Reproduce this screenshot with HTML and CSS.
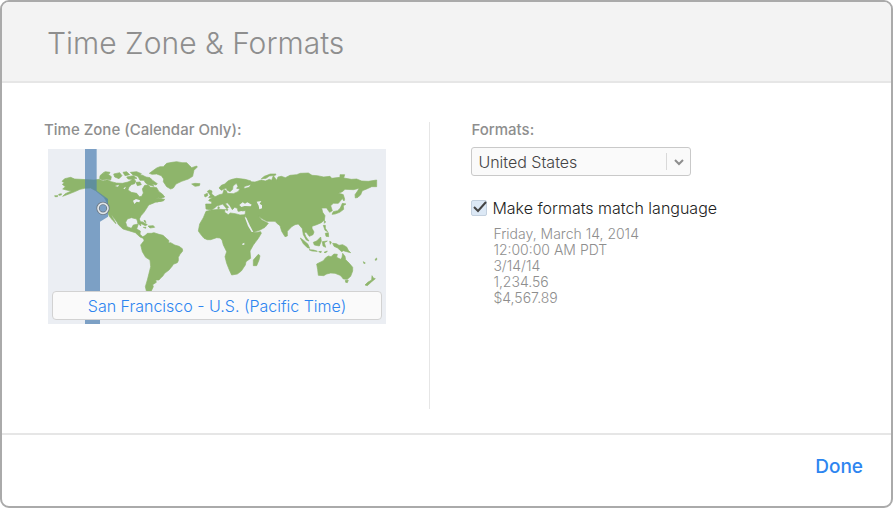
FILE: index.html
```
<!DOCTYPE html>
<html lang="en">
<head>
  <meta charset="UTF-8" />
  <meta name="viewport" content="width=device-width, initial-scale=1.0" />
  <title>Time Zone &amp; Formats</title>
  <link rel="stylesheet" href="styles.css">
</head>
<body>
  <form class="dialog">
    <header>
      <h1>Time Zone &amp; Formats</h1>
    </header>

    <main class="content">
      <section class="timezone">
        <h2>Time Zone (Calendar Only):</h2>
        <div class="map">
          <svg viewBox="0 0 1014 525" role="img" aria-label="World map">
            <g class="land">
              <!-- North America -->
              <path d="M43 106L49 101L42 97L50 89L68 85L80 90L98 91L138 93L153 91L165 96L178 92L190 98L205 102L223 103L240 99L252 93L263 96L260 104L250 107L243 115L240 123L250 130L266 133L274 143L281 142L286 132L283 120L290 109L300 108L308 115L318 115L326 116L333 128L343 135L350 144L340 148L330 146L322 152L336 153L340 157L326 158L312 164L302 168L296 178L288 190L279 200L274 210L279 222L278 231L270 222L266 210L250 206L238 210L233 220L237 233L250 238L256 228L271 225L266 240L277 246L276 256L284 263L298 258L290 270L276 264L262 251L245 246L225 240L212 228L206 218L194 202L190 198L201 218L204 224L194 214L184 202L180 193L177 178L177 160L168 145L153 133L143 125L128 117L110 118L96 121L83 127L60 136L44 142L52 134L70 126L55 123L44 120L52 113Z" />
              <path d="M156 80L164 73L181 76L190 83L188 93L177 90L164 93L155 89ZM166 71L172 68L186 70L184 74L172 75ZM197 75L215 71L222 80L213 89L200 84ZM225 70L236 68L245 77L231 80ZM236 84L256 80L267 88L250 91L240 90ZM247 70L266 68L280 74L274 83L255 78ZM270 82L282 78L294 84L306 86L315 95L328 104L324 108L312 105L318 112L300 107L292 101L288 94L276 94ZM264 100L276 99L280 107L268 110ZM320 152L330 147L342 150L350 151L346 156L334 157L326 160ZM253 87L262 94L251 96ZM20 140L30 140L28 143L21 143ZM32 136L40 134L40 138L33 139Z" />
              <path d="M268 222L282 218L298 227L292 230L280 224ZM300 231L316 230L320 235L306 237ZM286 235L294 235L293 238ZM288 214L292 215L294 221L289 218Z" />
              <!-- Greenland, Iceland -->
              <path d="M304 73L326 57L336 53L346 53L356 43L372 40L386 38L402 41L416 41L425 50L431 56L446 51L448 54L438 64L436 72L434 82L421 90L401 97L384 105L376 117L368 120L356 113L346 98L347 90L340 80L326 75L312 76ZM431 105L441 103L456 104L454 110L441 112Z" />
              <!-- South America -->
              <path d="M278 288L288 275L286 265L298 253L310 253L318 251L333 256L345 259L355 268L363 275L361 282L368 281L380 288L393 292L403 299L404 306L396 316L391 325L391 335L388 341L376 346L373 351L363 363L350 373L344 382L338 387L333 393L323 393L325 400L314 407L316 413L308 430L312 444L298 444L296 430L292 413L298 393L303 373L308 353L306 333L293 325L283 308Z" />
              <!-- Africa and Madagascar -->
              <path d="M474 187L491 183L516 181L531 182L530 190L541 197L547 192L562 194L576 198L591 197L591 205L606 232L618 251L638 248L640 253L631 268L616 288L606 306L608 328L594 338L592 348L580 366L568 375L551 378L544 363L536 343L531 323L536 308L526 288L522 273L516 267L506 266L488 272L478 272L468 268L458 256L451 246L455 225L466 206ZM616 350L616 333L631 316L636 320L633 333L626 350Z" />
              <!-- Europe and Asia -->
              <path d="M473 165L491 165L491 158L482 155L485 151L498 145L514 137L524 135L528 122L535 125L538 133L556 134L570 128L576 120L592 118L604 115L608 107L592 103L606 98L621 99L640 93L652 96L664 91L671 94L676 80L686 94L690 84L700 82L712 86L726 79L746 77L757 73L781 72L792 79L808 80L827 84L846 82L851 88L876 85L876 77L890 77L887 87L910 91L926 90L941 96L961 97L986 93L986 113L971 113L956 120L943 125L938 137L930 145L922 147L921 137L928 127L934 118L916 122L891 121L883 128L871 133L884 136L882 150L871 163L856 163L848 170L853 185L845 190L839 182L836 177L821 177L824 190L831 200L829 213L820 221L806 227L792 232L792 238L798 249L795 257L784 262L774 249L769 252L774 264L783 276L775 273L766 257L763 239L751 225L741 227L731 233L718 247L718 261L711 263L701 247L696 230L688 224L681 217L656 217L640 208L632 200L640 212L646 215L661 223L651 235L636 243L616 250L604 230L594 207L591 197L593 185L570 187L568 178L560 175L553 182L546 170L538 161L532 164L542 175L536 179L524 165L516 168L506 171L500 177L490 183L474 180Z" />
              <path d="M513 117L520 109L530 105L541 95L552 91L566 88L591 91L609 96L604 108L590 112L586 120L576 120L566 118L570 112L565 103L555 111L554 121L546 128L538 124L534 117L520 124ZM640 89L649 82L667 75L684 75L682 79L664 81L654 88ZM478 127L485 123L492 126L491 135L500 142L496 146L482 146L487 139ZM469 137L478 133L479 140L471 144ZM511 173L514 174L513 180L509 178ZM532 181L540 181L538 185Z" />
              <!-- Japan, Philippines, Indonesia -->
              <path d="M881 139L886 137L890 151L888 156L883 149ZM883 163L894 165L886 170L887 181L875 190L861 195L852 196L856 188L869 185L877 177ZM829 214L833 219L829 223ZM826 229L832 229L832 238L839 248L831 244ZM832 253L841 251L842 263L834 262ZM757 267L768 275L780 286L785 298L778 296L766 284ZM783 302L797 303L808 307L792 306ZM796 280L806 276L818 264L820 276L814 291L799 288ZM823 278L838 276L829 281L833 295L825 291ZM812 308L820 307L819 311ZM828 310L838 306L834 311ZM845 277L850 279L847 286ZM854 283L865 284L873 289L884 287L896 294L901 304L908 311L896 308L886 305L881 308L869 297L858 292Z" />
              <!-- Australia and New Zealand -->
              <path d="M806 345L820 338L826 335L833 326L841 321L849 323L858 315L868 316L866 325L878 331L882 325L884 313L891 322L893 332L904 343L914 355L914 366L908 382L898 391L886 390L879 381L874 378L861 373L848 372L836 375L827 380L811 379L809 362ZM892 394L901 394L898 401L893 400ZM972 380L976 387L982 389L971 398L958 410L951 408L959 400L971 393ZM946 338L952 342L948 344ZM982 330L986 327L986 333L982 334Z" />
            </g>
            <path class="water" d="M574 168L584 160L591 164L598 160L611 167L608 172L590 171L580 174ZM626 158L640 156L635 164L642 169L642 178L634 181L632 170ZM255 155L264 150L276 154L274 160L266 158L259 165ZM583 284L589 281L589 287L583 288ZM201 111L213 107L210 113ZM575 186L583 186L580 189ZM226 118L234 113L230 121Z" />
            <path class="water" d="M590 204L595 206L606 230L616 249L611 249L600 231Z" />
            <path class="zone" d="M111 0H146V125L180 150V203L156 218V525H111Z" />
            <circle class="pin-edge" cx="165" cy="178" r="15" />
            <circle class="pin" cx="165" cy="178" r="15" />
          </svg>
          <button type="button" class="city">San Francisco - U.S. (Pacific Time)</button>
        </div>
      </section>

      <section class="formats">
        <label class="heading" for="region">Formats:</label>
        <div class="select">
          <select id="region">
            <option>United States</option>
          </select>
          <svg viewBox="0 0 10 8" aria-hidden="true"><path d="M1 2L5 6L9 2" /></svg>
        </div>

        <div class="match">
          <span class="tick">
            <input type="checkbox" id="match" checked />
            <svg viewBox="0 0 16 16" aria-hidden="true"><path d="M3 7L7 11L15 2" /></svg>
          </span>
          <label for="match">Make formats match language</label>
        </div>
        <ul>
          <li>Friday, March 14, 2014</li>
          <li>12:00:00 AM PDT</li>
          <li>3/14/14</li>
          <li>1,234.56</li>
          <li>$4,567.89</li>
        </ul>
      </section>
    </main>

    <footer>
      <button type="button" class="done">Done</button>
    </footer>
  </form>
</body>
</html>
```
FILE: styles.css
```
* {
  box-sizing: border-box;
}
body {
  margin: 0;
  background-color: #fff;
  font-family: Inter, "Liberation Sans", sans-serif;
  color: #8e8e8e;
}
button, select, input {
  margin: 0;
  font-family: inherit;
}
.dialog {
  display: flex;
  flex-direction: column;
  min-height: calc(100vh - 2px);
  margin: 0 1px 2px 0;
  border: 2px solid #aaa;
  border-radius: 9px;
  overflow: hidden;
}
header {
  padding: 21px 45px 18px;
  background-color: #f3f3f3;
  border-bottom: 2px solid #e6e6e6;
}
h1 {
  margin: 0;
  font-size: 30px;
  font-weight: 300;
  line-height: 40px;
}
.content {
  display: flex;
  flex: 1;
  padding: 39px 42px 24px;
}
h2, .heading {
  display: block;
  margin: 0;
  font-size: 15px;
  font-weight: 500;
  line-height: 15px;
}
.timezone {
  flex: 0 0 48%;
  border-right: 1px solid #e6e6e6;
}
.map {
  position: relative;
  width: 338px;
  margin: 12px 0 0 4px;
  background-color: #ebeef3;
}
.map svg {
  display: block;
  width: 100%;
}
.land {
  fill: #8eb56b;
  stroke: #8eb56b;
  stroke-width: 2px;
}
.water {
  fill: #ebeef3;
}
.zone {
  fill: #4d7fb0;
  fill-opacity: 0.7;
}
.pin-edge, .pin {
  fill: none;
  stroke: #6e7a86;
  stroke-width: 10px;
}
.pin {
  stroke: #dfe5ea;
  stroke-width: 5px;
}
.city {
  position: absolute;
  right: 4px;
  bottom: 4px;
  left: 4px;
  height: 29px;
  padding: 0;
  background-color: #fafafa;
  border: 1px solid #d2d2d2;
  border-radius: 4px;
  color: #2d85f0;
  font-size: 16px;
  font-weight: 300;
}
.formats {
  padding-left: 41px;
}
.select {
  position: relative;
  width: 220px;
  margin-top: 10px;
}
.select::after {
  content: "";
  position: absolute;
  top: 6px;
  right: 24px;
  bottom: 6px;
  border-left: 1px solid #d9d9d9;
}
.select select {
  display: block;
  width: 100%;
  height: 29px;
  padding: 0 30px 0 6px;
  appearance: none;
  background-color: #fafafa;
  border: 1px solid #c9c9c9;
  border-radius: 3px;
  color: #444;
  font-size: 16px;
  font-weight: 300;
}
.select svg {
  position: absolute;
  top: 11px;
  right: 7px;
  width: 10px;
  height: 8px;
  fill: none;
  stroke: #8e8e8e;
  stroke-width: 2px;
  pointer-events: none;
}
.match {
  display: flex;
  align-items: center;
  gap: 5px;
  margin-top: 22px;
  color: #222;
  font-size: 16px;
  font-weight: 300;
  line-height: 20px;
}
.tick {
  position: relative;
  width: 16px;
  height: 16px;
}
.tick input {
  display: block;
  width: 16px;
  height: 16px;
  appearance: none;
  background-color: #dce8f5;
  border: 1px solid #c3d0de;
  border-radius: 2px;
}
.tick svg {
  position: absolute;
  top: 0;
  left: 0;
  display: none;
  fill: none;
  stroke: #444;
  stroke-width: 2px;
  pointer-events: none;
}
.tick input:checked + svg {
  display: block;
}
ul {
  margin: 8px 0 0;
  padding: 0 0 0 22px;
  list-style: none;
  font-size: 14px;
  font-weight: 300;
  line-height: 16px;
}
footer {
  display: flex;
  justify-content: flex-end;
  padding: 20px 28px 27px;
  border-top: 2px solid #e6e6e6;
}
.done {
  padding: 0;
  background: none;
  border: none;
  color: #2d85f0;
  font-size: 19px;
  font-weight: 500;
  line-height: 24px;
  cursor: pointer;
}
```
